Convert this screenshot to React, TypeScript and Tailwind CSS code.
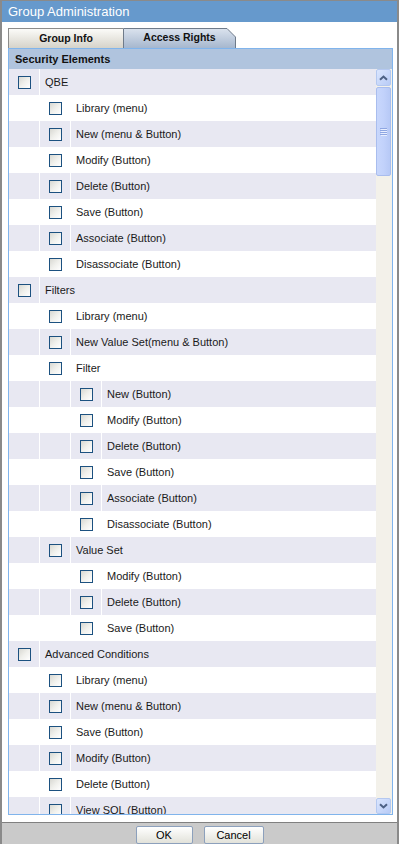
import React from "react";

const rows: [string, number][] = [
  ["QBE", 0],
  ["Library (menu)", 1],
  ["New (menu & Button)", 1],
  ["Modify (Button)", 1],
  ["Delete (Button)", 1],
  ["Save (Button)", 1],
  ["Associate (Button)", 1],
  ["Disassociate (Button)", 1],
  ["Filters", 0],
  ["Library (menu)", 1],
  ["New Value Set(menu & Button)", 1],
  ["Filter", 1],
  ["New (Button)", 2],
  ["Modify (Button)", 2],
  ["Delete (Button)", 2],
  ["Save (Button)", 2],
  ["Associate (Button)", 2],
  ["Disassociate (Button)", 2],
  ["Value Set", 1],
  ["Modify (Button)", 2],
  ["Delete (Button)", 2],
  ["Save (Button)", 2],
  ["Advanced Conditions", 0],
  ["Library (menu)", 1],
  ["New (menu & Button)", 1],
  ["Save (Button)", 1],
  ["Modify (Button)", 1],
  ["Delete (Button)", 1],
  ["View SQL (Button)", 1],
];

function Checkbox() {
  return (
    <div className="w-[13px] h-[13px] border border-[#1c5180] bg-linear-to-br from-[#d8d8d2] via-[#f0f0ec] to-white" />
  );
}

function Row({ label, level, odd }: { label: string; level: number; odd: boolean }) {
  const bg = odd ? "bg-white" : "bg-[#e8e8f2]";
  const indents = [];
  for (let i = 0; i < level; i++) {
    indents.push(<div key={i} className={`w-[30px] shrink-0 ${bg}`} />);
  }
  return (
    <div className="h-[26px] flex gap-[1px] bg-white shrink-0">
      {indents}
      <div className={`w-[30px] shrink-0 flex items-center justify-center ${bg}`}>
        <Checkbox />
      </div>
      <div className={`flex-1 flex items-center pl-[5px] text-[11px] text-[#1a1a1a] whitespace-nowrap ${bg}`}>
        {label}
      </div>
    </div>
  );
}

function Chevron({ down }: { down?: boolean }) {
  return (
    <svg width="9" height="6" viewBox="0 0 9 6">
      <path
        d={down ? "M1 1.2 L4.5 4.5 L8 1.2" : "M1 4.8 L4.5 1.5 L8 4.8"}
        fill="none"
        stroke="#4d6185"
        strokeWidth="2"
      />
    </svg>
  );
}

function Scrollbar() {
  return (
    <div className="w-[16px] bg-[#f3f1ea] flex flex-col">
      <div className="h-[17px] w-[15px] rounded-[2px] border border-[#b4c8f0] bg-linear-to-br from-[#dbe6fe] to-[#b8cbf6] flex items-center justify-center">
        <Chevron />
      </div>
      <div className="mt-[1px] h-[89px] w-[15px] rounded-[2px] border border-[#a9bdee] bg-linear-to-r from-[#c8d7fc] via-[#c2d2fb] to-[#b7c9f6] flex items-center justify-center">
        <svg width="7" height="8" viewBox="0 0 7 8">
          <rect x="0" y="0" width="7" height="1" fill="#8ea6e2" />
          <rect x="0" y="2" width="7" height="1" fill="#8ea6e2" />
          <rect x="0" y="4" width="7" height="1" fill="#8ea6e2" />
          <rect x="0" y="6" width="7" height="1" fill="#8ea6e2" />
          <rect x="1" y="1" width="7" height="1" fill="#e8eeff" />
          <rect x="1" y="3" width="7" height="1" fill="#e8eeff" />
          <rect x="1" y="5" width="7" height="1" fill="#e8eeff" />
          <rect x="1" y="7" width="7" height="1" fill="#e8eeff" />
        </svg>
      </div>
      <div className="flex-1" />
      <div className="h-[16px] w-[15px] rounded-[2px] border border-[#b4c8f0] bg-linear-to-br from-[#dbe6fe] to-[#b8cbf6] flex items-center justify-center">
        <Chevron down />
      </div>
    </div>
  );
}

export default function App() {
  return (
    <div className="w-[399px] h-[844px] flex flex-col bg-white border-x-2 border-t border-[#8a8a8a] font-['Liberation_Sans',Arial,sans-serif] overflow-hidden">
      <div className="h-[21px] shrink-0 bg-[#6699cc] text-white text-[13px] pl-[6px] flex items-center leading-none">
        Group Administration
      </div>
      <div className="mt-[6px] ml-[6px] flex h-[20px] shrink-0">
        <div className="w-[115px] border-t border-l border-[#8c8c8c] bg-linear-to-b from-[#fbfbf8] to-[#d6d3ca] flex items-center justify-center text-[10.5px] font-bold text-[#111]">
          Group Info
        </div>
        <div className="relative w-[113px] h-[20px] flex items-center justify-center">
          <svg className="absolute inset-0" width="113" height="20" viewBox="0 0 113 20">
            <defs>
              <linearGradient id="tabg" x1="0" y1="0" x2="0" y2="1">
                <stop offset="0" stopColor="#dbe3ee" />
                <stop offset="1" stopColor="#a6b7ce" />
              </linearGradient>
            </defs>
            <path d="M0.5 20 V0.5 H104 L112.5 9 V20 Z" fill="url(#tabg)" />
            <path d="M0.5 20 V0.5 H104 L112.5 9 V20" fill="none" stroke="#6f7b8a" strokeWidth="1" />
          </svg>
          <span className="relative text-[10.5px] font-bold text-[#111]">Access Rights</span>
        </div>
      </div>
      <div className="ml-[6px] w-[385px] h-[767px] shrink-0 border border-[#80b4ec] flex flex-col">
        <div className="h-[20px] shrink-0 bg-[#b0c4de] flex items-center pl-[6px] text-[11px] font-bold text-[#111]">
          Security Elements
        </div>
        <div className="flex flex-1 min-h-0">
          <div className="w-[367px] overflow-hidden flex flex-col">
            {rows.map(([label, level], i) => (
              <Row key={i} label={label} level={level} odd={i % 2 === 1} />
            ))}
          </div>
          <Scrollbar />
        </div>
      </div>
      <div className="mt-[7px] border-t border-[#808080] flex-1 bg-[#cacaca] flex justify-center gap-[11px] pt-[3px]">
        <div className="w-[57px] h-[18px] border border-[#8ca0bc] rounded-[2px] bg-linear-to-b from-white to-[#e2e2da] flex items-center justify-center text-[11px] text-black">
          OK
        </div>
        <div className="w-[60px] h-[18px] border border-[#8ca0bc] rounded-[2px] bg-linear-to-b from-white to-[#e2e2da] flex items-center justify-center text-[11px] text-black">
          Cancel
        </div>
      </div>
    </div>
  );
}
